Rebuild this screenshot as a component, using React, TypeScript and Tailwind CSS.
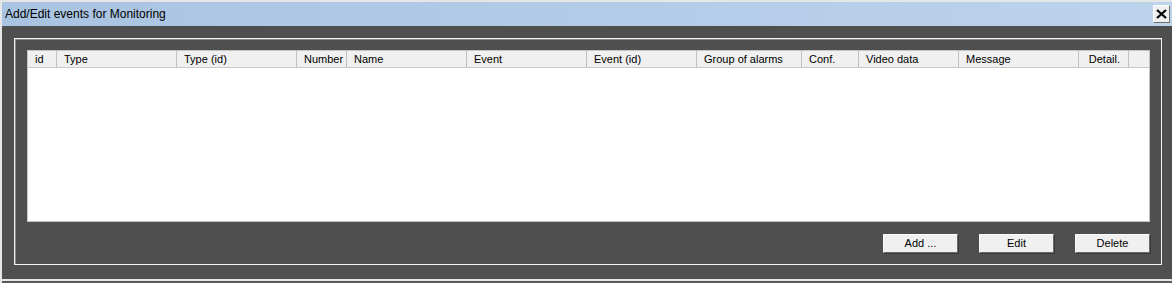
const columns = [
  { label: "id", w: "w-[29px]" },
  { label: "Type", w: "w-[120px]" },
  { label: "Type (id)", w: "w-[120px]" },
  { label: "Number", w: "w-[50px]" },
  { label: "Name", w: "w-[120px]" },
  { label: "Event", w: "w-[120px]" },
  { label: "Event (id)", w: "w-[110px]" },
  { label: "Group of alarms", w: "w-[105px]" },
  { label: "Conf.", w: "w-[57px]" },
  { label: "Video data", w: "w-[100px]" },
  { label: "Message", w: "w-[120px]" },
  { label: "Detail.", w: "w-[50px]", right: true },
];

function WinButton({ children }: { children: React.ReactNode }) {
  return (
    <button className="flex h-[19px] w-[75px] items-center justify-center border border-t-[#fcfcfc] border-l-[#fcfcfc] border-r-[#6a6a6a] border-b-[#6a6a6a] bg-[#f0f0f0] text-[11px] leading-none text-black shadow-[1px_1px_0_#3a3a3a]">
      {children}
    </button>
  );
}

export default function App() {
  return (
    <div
      className="flex h-[283px] w-[1172px] flex-col overflow-hidden border-l-2 border-t-2 border-[#e6e6e6] bg-[#4f4f4f] text-black"
      style={{ fontFamily: '"Liberation Sans", Arial, sans-serif' }}
    >
      {/* title bar */}
      <div className="flex h-[24px] shrink-0 items-center bg-gradient-to-r from-[#a9c3e2] to-[#bcd3ec] pl-[3px]">
        <span className="text-[12px]">Add/Edit events for Monitoring</span>
        <button className="ml-auto mr-[2px] flex h-[18px] w-[17px] items-center justify-center border border-t-[#ffffff] border-l-[#ffffff] border-r-[#707070] border-b-[#707070] bg-[#f0f0f0]">
          <svg width="11" height="10" viewBox="0 0 11 10">
            <path d="M1 1 L10 9 M10 1 L1 9" stroke="#000" strokeWidth="2.2" />
          </svg>
        </button>
      </div>

      {/* body */}
      <div className="flex flex-1 flex-col pl-[12px] pr-[10px] pt-[12px] pb-[14px]">
        <div className="flex flex-1 flex-col border border-[#f2f2f2] shadow-[inset_1px_1px_0_#8a8a8a] pl-[12px] pr-[11px] pt-[11px] pb-[11px]">
          {/* list view */}
          <div className="flex flex-1 flex-col border border-[#c4c4c4] bg-white">
            <div className="flex h-[17px] shrink-0 border-b border-[#c8c8c8] bg-[#f0f0f0] text-[11px]">
              {columns.map((c) => (
                <div
                  key={c.label}
                  className={`${c.w} flex shrink-0 items-center border-r border-[#c0c0c0] ${c.right ? "justify-end pr-[8px]" : "pl-[7px]"}`}
                >
                  {c.label}
                </div>
              ))}
              <div className="flex-1" />
            </div>
            <div className="flex-1" />
          </div>

          {/* buttons */}
          <div className="mt-[12px] flex justify-end gap-[21px]">
            <WinButton>Add ...</WinButton>
            <WinButton>Edit</WinButton>
            <WinButton>Delete</WinButton>
          </div>
        </div>
      </div>

      <div className="h-[2px] shrink-0 bg-[#e6e6e6]" />
      <div className="h-[2px] shrink-0 bg-[#5a5a5a]" />
    </div>
  );
}
